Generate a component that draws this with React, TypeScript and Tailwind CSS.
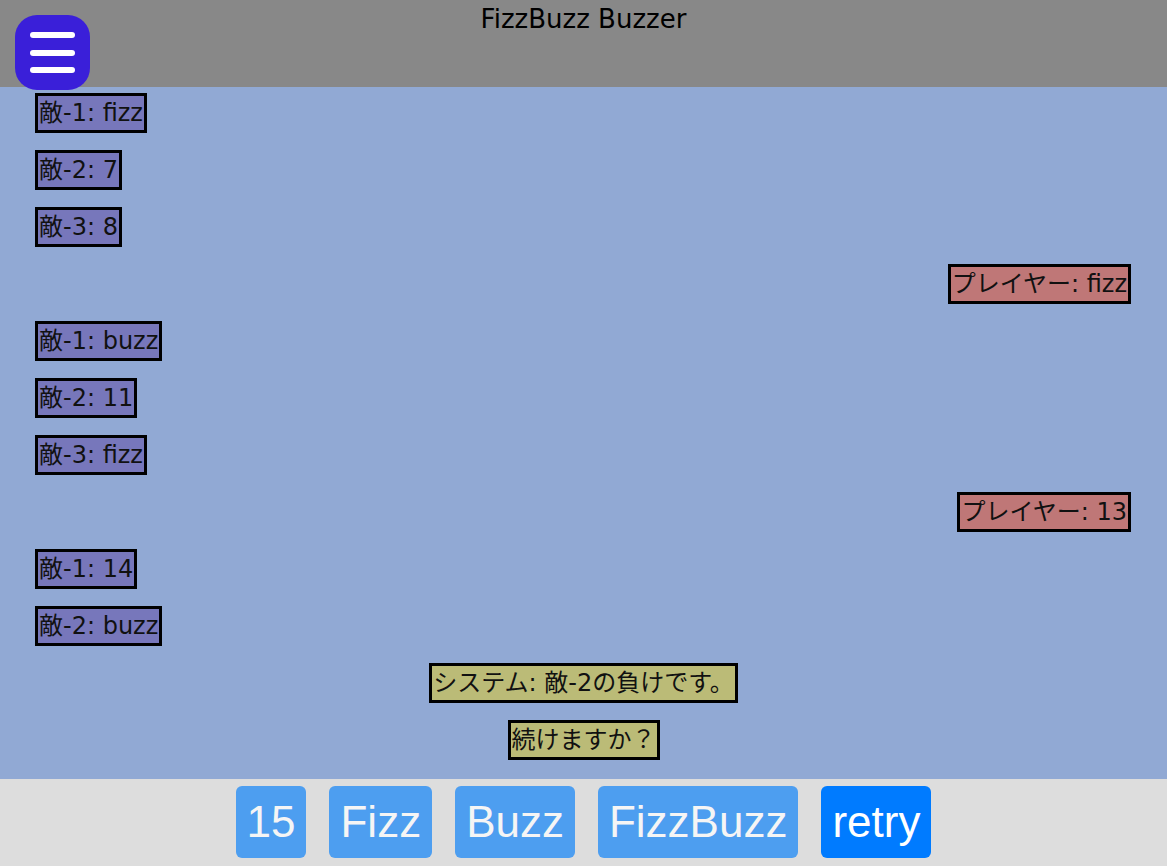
import React from "react";

type Msg = { who: "enemy" | "player" | "system"; text: string };

const msgs: Msg[] = [
  { who: "enemy", text: "敵-1: fizz" },
  { who: "enemy", text: "敵-2: 7" },
  { who: "enemy", text: "敵-3: 8" },
  { who: "player", text: "プレイヤー: fizz" },
  { who: "enemy", text: "敵-1: buzz" },
  { who: "enemy", text: "敵-2: 11" },
  { who: "enemy", text: "敵-3: fizz" },
  { who: "player", text: "プレイヤー: 13" },
  { who: "enemy", text: "敵-1: 14" },
  { who: "enemy", text: "敵-2: buzz" },
  { who: "system", text: "システム: 敵-2の負けです。" },
  { who: "system", text: "続けますか？" },
];

const jp = { fontFamily: '"DejaVu Sans", "Noto Sans CJK JP", sans-serif' };

export default function App() {
  return (
    <div className="flex h-[866px] w-full flex-col overflow-hidden" style={jp}>
      <header className="relative h-[87px] shrink-0 bg-[#888888]">
        <h1 className="pt-[2px] text-center text-[26px] leading-[34px] text-black">FizzBuzz Buzzer</h1>
        <button className="absolute left-[15px] top-[15px] flex h-[75px] w-[75px] flex-col items-center justify-center gap-[11.5px] rounded-[22px] bg-[#3a1fd9]">
          <span className="block h-[6px] w-[45px] rounded-full bg-white" />
          <span className="block h-[6px] w-[45px] rounded-full bg-white" />
          <span className="block h-[6px] w-[45px] rounded-full bg-white" />
        </button>
      </header>
      <main className="flex flex-1 flex-col gap-[17px] bg-[#91a9d4] px-[35px] pt-[6px]">
        {msgs.map((m, i) => (
          <div
            key={i}
            className={
              m.who === "enemy"
                ? "flex justify-start"
                : m.who === "player"
                ? "flex justify-end pr-[1px]"
                : "flex justify-center"
            }
          >
            <span
              className={
                "block h-[40px] whitespace-nowrap border-[3px] border-black px-[1px] text-[24px] leading-[34px] text-[#111] " +
                (m.who === "enemy"
                  ? "bg-[#7777bb]"
                  : m.who === "player"
                  ? "bg-[#bf7777]"
                  : "bg-[#bbbb77]")
              }
            >
              {m.text}
            </span>
          </div>
        ))}
      </main>
      <footer
        className="flex h-[87px] shrink-0 items-start justify-center gap-[23px] bg-[#dddddd] pt-[7px]"
        style={{ fontFamily: '"Liberation Sans", Arial, sans-serif' }}
      >
        {["15", "Fizz", "Buzz", "FizzBuzz"].map((t) => (
          <button key={t} className="h-[72px] rounded-[6px] bg-[#4d9ef0] px-[11px] text-[44px] leading-[50px] text-[#f5f5f5]">
            {t}
          </button>
        ))}
        <button className="h-[72px] rounded-[6px] bg-[#007bff] px-[11px] text-[44px] leading-[50px] text-white">
          retry
        </button>
      </footer>
    </div>
  );
}
